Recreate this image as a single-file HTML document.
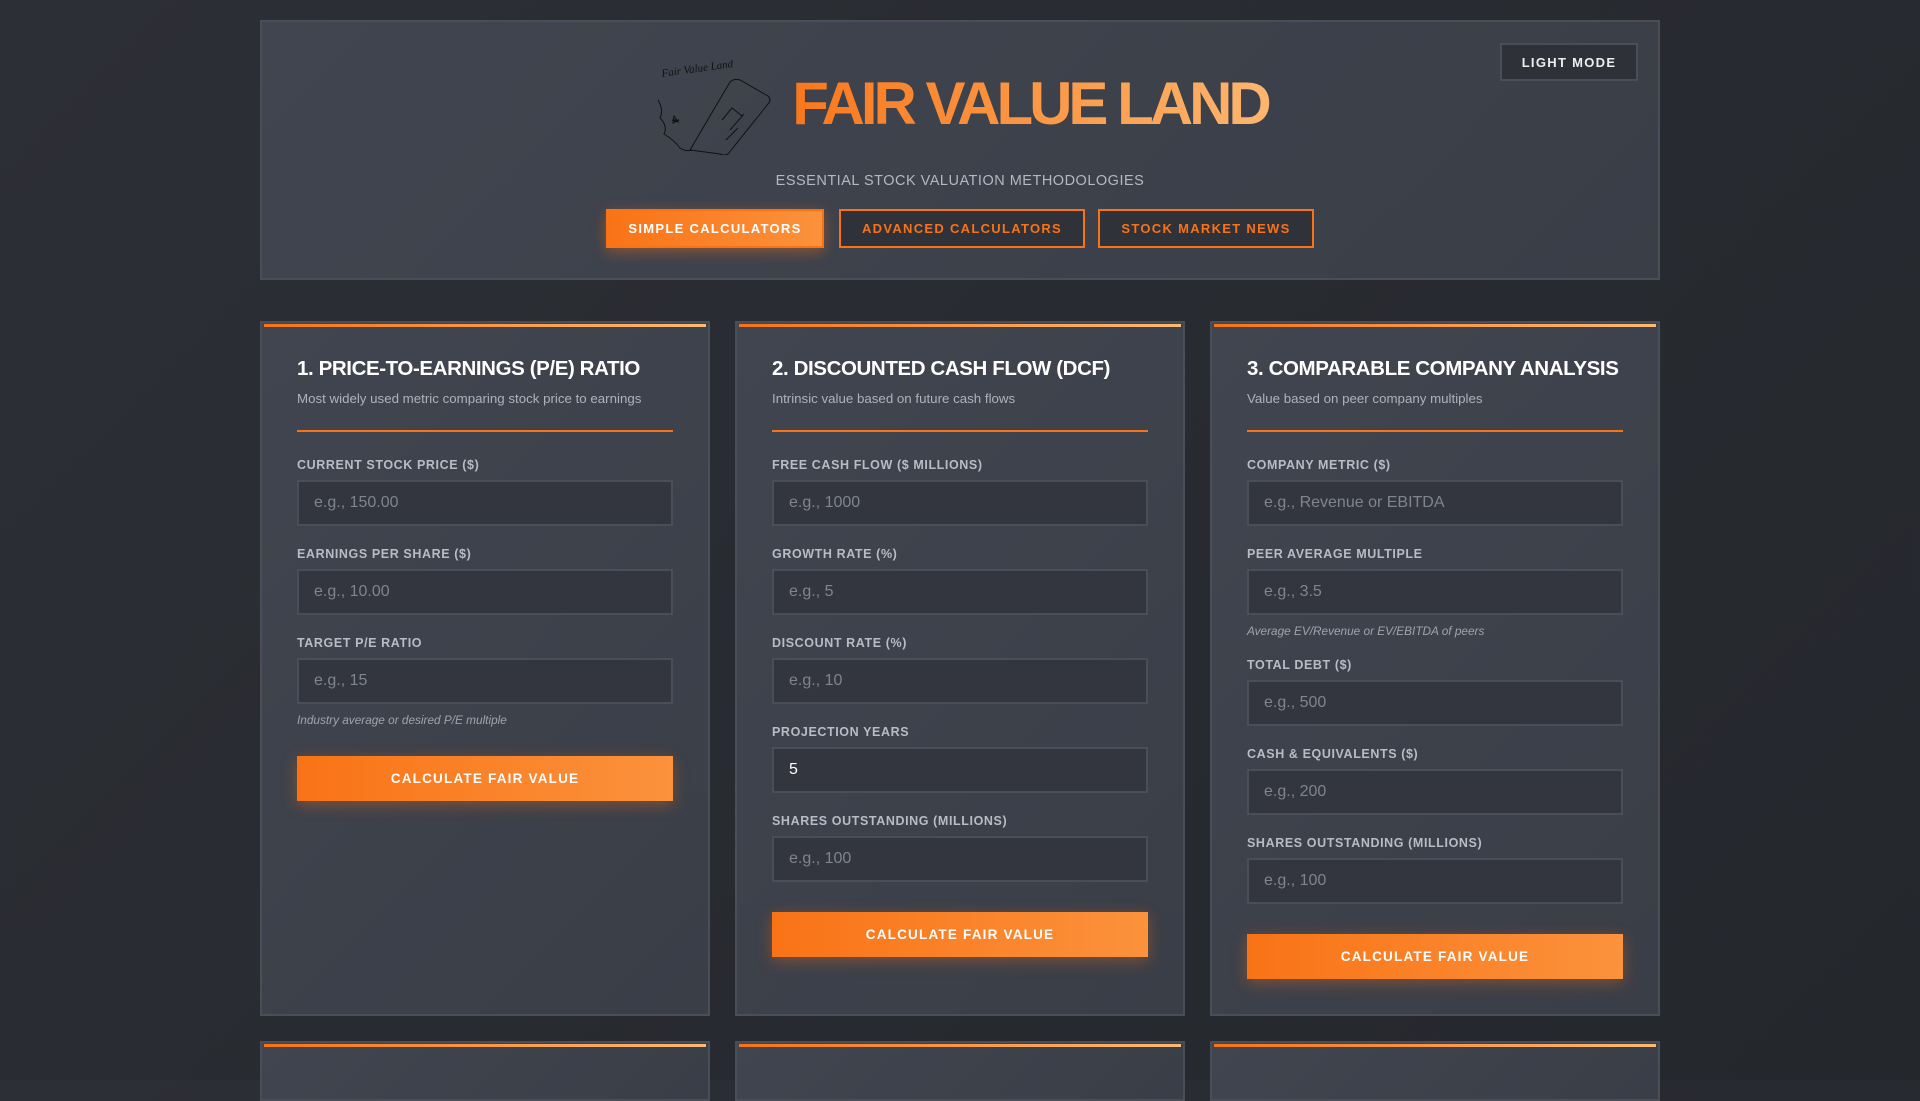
<!DOCTYPE html>
<html><head><meta charset="utf-8"><style>
*{box-sizing:border-box;margin:0;padding:0}
body{width:1920px;height:1080px;overflow:hidden;background:linear-gradient(135deg,#2c2f35,#24272c);font-family:"Liberation Sans",Arial,sans-serif;position:relative}
.box{position:absolute;border:2px solid #4a4e58;background:linear-gradient(135deg,#41454f,#3a3e47)}
.card::before{content:"";position:absolute;left:2px;right:2px;top:1px;height:3px;background:linear-gradient(90deg,#f97316,#fdba74)}
.abs{position:absolute}
h1{position:absolute;left:760px;top:71px;width:540px;text-align:center;font-size:60px;font-weight:bold;letter-spacing:-4px;background:linear-gradient(90deg,#f97316,#fdba74);-webkit-background-clip:text;color:transparent;line-height:66px}
.sub{position:absolute;left:0;width:1920px;top:173px;text-align:center;color:#b4b8c0;font-size:14.5px;letter-spacing:0.5px}
.nb{position:absolute;top:209px;height:39px;border:2px solid #f97316;color:#f97316;background:#2f3239;font-size:13px;font-weight:bold;letter-spacing:1.3px;display:flex;align-items:center;justify-content:center}
.nb.on{background:linear-gradient(90deg,#f97316,#fb923c);color:#fff;box-shadow:0 4px 14px rgba(249,115,22,.4)}
.lm{position:absolute;left:1500px;top:43px;width:138px;height:38px;background:#2e3138;border:2px solid #4a4e58;color:#eee;font-size:13px;font-weight:bold;letter-spacing:1.3px;display:flex;align-items:center;justify-content:center}
.t{position:absolute;color:#fff;font-size:20.5px;font-weight:bold;letter-spacing:-0.4px;white-space:nowrap}
.d{position:absolute;color:#aeb2ba;font-size:13.3px}
.hr{position:absolute;height:2px;width:376px;background:#f97316}
.l{position:absolute;color:#b8bcc4;font-size:12.5px;font-weight:bold;letter-spacing:0.6px}
.i{position:absolute;width:376px;height:46px;background:#33363e;border:2px solid #4a4e58;color:#80848c;font-size:16px;padding-left:15px;display:flex;align-items:center}
.h{position:absolute;color:#a0a4ac;font-size:11.8px;font-style:italic}
.b{position:absolute;width:376px;height:45px;background:linear-gradient(90deg,#f97316,#fb923c);color:#fff;font-size:13.5px;font-weight:bold;letter-spacing:1.2px;display:flex;align-items:center;justify-content:center;box-shadow:0 4px 14px rgba(249,115,22,.35)}
</style></head><body>
<div class="box" style="left:260px;top:20px;width:1400px;height:260px"></div>
<svg class="abs" style="left:652px;top:60px" width="120" height="95" viewBox="0 0 120 95" fill="none" stroke="#111" stroke-width="1">
<text x="10" y="17" font-family="Liberation Serif" font-style="italic" font-size="11" fill="#111" stroke="none" transform="rotate(-8 10 17)">Fair Value Land</text>
<path d="M38 90 L78 22 Q82 18 88 20 L116 36 Q120 40 116 44 L76 94 Q72 96 68 94 Z"/>
<path d="M70 60 L80 48 L90 56 M78 70 L92 54 M74 80 L86 68"/>
<path d="M6 40 Q12 50 8 58 Q16 66 12 74 Q22 80 28 88 Q34 92 40 90"/>
<path d="M22 56 l4 6 l-6 -2 l7 0 l-6 3 z"/>
</svg>
<h1>FAIR VALUE LAND</h1>
<div class="sub">ESSENTIAL STOCK VALUATION METHODOLOGIES</div>
<div class="nb on" style="left:606px;width:218px">SIMPLE CALCULATORS</div>
<div class="nb" style="left:839px;width:246px">ADVANCED CALCULATORS</div>
<div class="nb" style="left:1098px;width:216px">STOCK MARKET NEWS</div>
<div class="lm">LIGHT MODE</div>

<div class="box card" style="left:260px;top:321px;width:450px;height:695px"></div>
<div class="box card" style="left:735px;top:321px;width:450px;height:695px"></div>
<div class="box card" style="left:1210px;top:321px;width:450px;height:695px"></div>
<div class="box card" style="left:260px;top:1041px;width:450px;height:60px"></div>
<div class="box card" style="left:735px;top:1041px;width:450px;height:60px"></div>
<div class="box card" style="left:1210px;top:1041px;width:450px;height:60px"></div>

<div class="t" style="left:297px;top:357px">1. PRICE-TO-EARNINGS (P/E) RATIO</div>
<div class="d" style="left:297px;top:391px">Most widely used metric comparing stock price to earnings</div>
<div class="hr" style="left:297px;top:430px"></div>
<div class="l" style="left:297px;top:458px">CURRENT STOCK PRICE ($)</div>
<div class="i" style="left:297px;top:480px">e.g., 150.00</div>
<div class="l" style="left:297px;top:547px">EARNINGS PER SHARE ($)</div>
<div class="i" style="left:297px;top:569px">e.g., 10.00</div>
<div class="l" style="left:297px;top:636px">TARGET P/E RATIO</div>
<div class="i" style="left:297px;top:658px">e.g., 15</div>
<div class="h" style="left:297px;top:713px">Industry average or desired P/E multiple</div>
<div class="b" style="left:297px;top:756px">CALCULATE FAIR VALUE</div>

<div class="t" style="left:772px;top:357px">2. DISCOUNTED CASH FLOW (DCF)</div>
<div class="d" style="left:772px;top:391px">Intrinsic value based on future cash flows</div>
<div class="hr" style="left:772px;top:430px"></div>
<div class="l" style="left:772px;top:458px">FREE CASH FLOW ($ MILLIONS)</div>
<div class="i" style="left:772px;top:480px">e.g., 1000</div>
<div class="l" style="left:772px;top:547px">GROWTH RATE (%)</div>
<div class="i" style="left:772px;top:569px">e.g., 5</div>
<div class="l" style="left:772px;top:636px">DISCOUNT RATE (%)</div>
<div class="i" style="left:772px;top:658px">e.g., 10</div>
<div class="l" style="left:772px;top:725px">PROJECTION YEARS</div>
<div class="i" style="left:772px;top:747px;color:#fff">5</div>
<div class="l" style="left:772px;top:814px">SHARES OUTSTANDING (MILLIONS)</div>
<div class="i" style="left:772px;top:836px">e.g., 100</div>
<div class="b" style="left:772px;top:912px">CALCULATE FAIR VALUE</div>

<div class="t" style="left:1247px;top:357px">3. COMPARABLE COMPANY ANALYSIS</div>
<div class="d" style="left:1247px;top:391px">Value based on peer company multiples</div>
<div class="hr" style="left:1247px;top:430px"></div>
<div class="l" style="left:1247px;top:458px">COMPANY METRIC ($)</div>
<div class="i" style="left:1247px;top:480px">e.g., Revenue or EBITDA</div>
<div class="l" style="left:1247px;top:547px">PEER AVERAGE MULTIPLE</div>
<div class="i" style="left:1247px;top:569px">e.g., 3.5</div>
<div class="h" style="left:1247px;top:624px">Average EV/Revenue or EV/EBITDA of peers</div>
<div class="l" style="left:1247px;top:658px">TOTAL DEBT ($)</div>
<div class="i" style="left:1247px;top:680px">e.g., 500</div>
<div class="l" style="left:1247px;top:747px">CASH &amp; EQUIVALENTS ($)</div>
<div class="i" style="left:1247px;top:769px">e.g., 200</div>
<div class="l" style="left:1247px;top:836px">SHARES OUTSTANDING (MILLIONS)</div>
<div class="i" style="left:1247px;top:858px">e.g., 100</div>
<div class="b" style="left:1247px;top:934px">CALCULATE FAIR VALUE</div>
</body></html>
